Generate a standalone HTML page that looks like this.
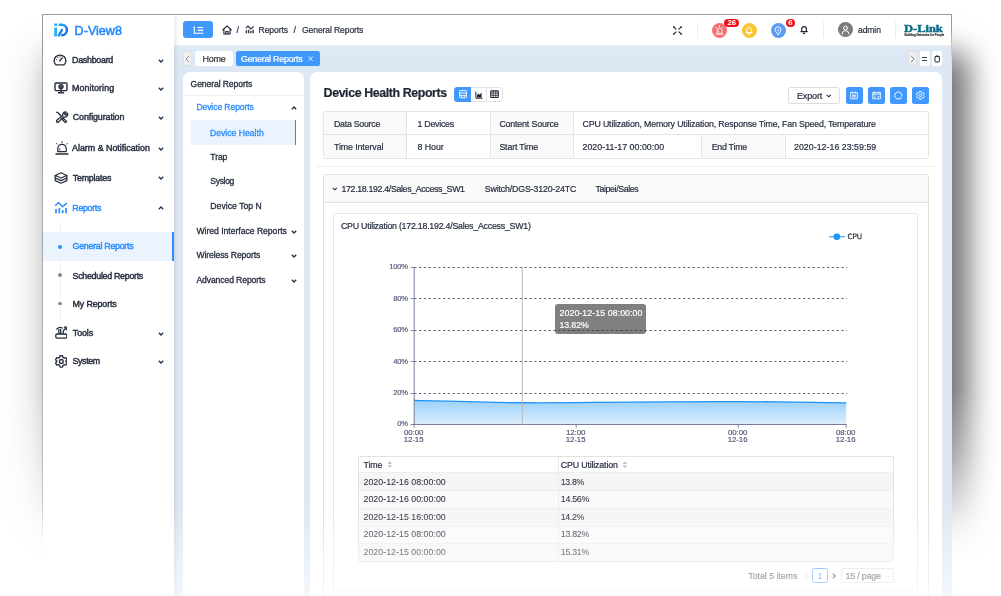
<!DOCTYPE html>
<html lang="en">
<head>
<meta charset="utf-8">
<title>D-View8 - Device Health Reports</title>
<style>
*{box-sizing:border-box;margin:0;padding:0}
html,body{width:1001px;height:596px;overflow:hidden;background:#fff}
body{font-family:"Liberation Sans",sans-serif;color:#262d3f;font-size:8.8px;line-height:1;-webkit-text-stroke:.2px currentColor}
#root{will-change:transform;position:relative;width:1001px;height:596px;overflow:hidden;background:#fff}
.abs{position:absolute}
.t{position:absolute;white-space:nowrap;line-height:12px;height:12px;transform:translateY(-6px)}
/* shadow */
#shadow{position:absolute;left:42px;top:14px;width:910px;height:620px;box-shadow:0 40px 44px rgba(0,0,0,.2),17px 40px 28px rgba(0,0,0,.5);
 -webkit-mask-image:none}
#shadowwrap{position:absolute;left:0;top:0;width:1001px;height:596px;overflow:hidden;
 -webkit-mask-image:linear-gradient(to bottom,#000 0,#000 388px,rgba(0,0,0,.86) 416px,rgba(0,0,0,.68) 452px,rgba(0,0,0,.4) 489px,rgba(0,0,0,.17) 522px,rgba(0,0,0,.05) 545px,transparent 562px);mask-image:linear-gradient(to bottom,#000 0,#000 388px,rgba(0,0,0,.86) 416px,rgba(0,0,0,.68) 452px,rgba(0,0,0,.4) 489px,rgba(0,0,0,.17) 522px,rgba(0,0,0,.05) 545px,transparent 562px)}
#win{position:absolute;left:42px;top:14px;width:910px;height:600px;background:#dce8f3;background-clip:padding-box;border:1px solid #9b9b9b;border-left-color:transparent;border-right:0;overflow:hidden}
/* everything inside #win is positioned relative to page coords via inner offset */
#in{position:absolute;left:-43px;top:-15px;width:1001px;height:620px}
#side{position:absolute;left:43px;top:15px;width:131px;height:600px;background:#fff;box-shadow:1px 0 5px rgba(0,30,70,.13)}
#top{position:absolute;left:174px;top:15px;width:778px;height:29.8px;background:#fff}
#band{position:absolute;left:174px;top:44.8px;width:778px;height:6px;background:linear-gradient(to bottom,#e7eff7 0,#dce8f3 5px)}
.m{font-weight:400;font-size:8.9px;color:#262d3f;letter-spacing:-.1px;-webkit-text-stroke:.42px currentColor}
.sub{font-weight:400;font-size:8.9px;color:#262d3f;letter-spacing:-.1px;-webkit-text-stroke:.42px currentColor}
.blue{color:#2a8cff !important}
.tb{font-size:8.8px;color:#262d3f;letter-spacing:-.15px}
.bc{font-size:8.6px;color:#262d3f;letter-spacing:-.12px}
.chev{position:absolute;width:6px;height:4px}
.panel{position:absolute;background:#fff;border-radius:7px 7px 0 0}
.lp{font-size:8.6px;color:#262d3f;letter-spacing:-.1px;-webkit-text-stroke:.3px currentColor}
.cell{position:absolute;border-right:1px solid #e4e4e4;border-bottom:1px solid #e4e4e4}
.lab{background:#fafafa}
.bbtn{position:absolute;width:17px;height:17px;background:#4098fc;border-radius:2.5px;top:87px}
.tick{position:absolute;font-size:7.6px;color:#4d5374;-webkit-text-stroke:.15px #4d5374;letter-spacing:-.2px;text-align:right;width:30px;line-height:10px;height:10px;transform:translateY(-5px)}
.xl{position:absolute;font-size:7.9px;color:#4d5374;-webkit-text-stroke:.15px #4d5374;text-align:center;width:40px;line-height:7.6px;letter-spacing:-.1px}
.row{position:absolute;left:358.5px;width:535px;height:17.8px;border-bottom:1px solid #e9e9e9}
.row .t{top:9px}
</style>
</head>
<body>
<div id="root">
 <div id="shadowwrap"><div id="shadow"></div></div>
 <div id="win"><div id="in">

  <!-- TOP BAR -->
  <div id="top"></div><div id="band"></div>
  <div class="abs" style="left:183.3px;top:21.2px;width:29.6px;height:17.3px;border-radius:3px;background:#4098fc"></div>
  <svg class="abs" style="left:192.6px;top:25.6px" width="11" height="8.4" viewBox="0 0 11 8.4" fill="none" stroke="#fff" stroke-linecap="butt">
   <path d="M1.3 .8 V7.2 H10.2" stroke-width="1.1"/><path d="M4.4 1.5 H10.2" stroke-width="1.1"/><path d="M5 4.3 H10.2" stroke-width="1.5"/><path d="M.6 1.2 H2" stroke-width="1.2"/>
  </svg>
  <!-- breadcrumb -->
  <svg class="abs" style="left:222px;top:24.5px" width="10" height="10" viewBox="0 0 10 10" fill="none" stroke="#262d3f" stroke-width="1.1" stroke-linejoin="round" stroke-linecap="round">
   <path d="M.7 5 L5 .9 L9.3 5"/><path d="M1.9 4.4 V9 H8.1 V4.4"/><path d="M3.8 9 V6.6 H6.2 V9"/>
  </svg>
  <div class="t" style="left:236.5px;top:29.6px;font-size:9px">/</div>
  <svg class="abs" style="left:245.4px;top:25.4px" width="9.4" height="8.7" viewBox="0 0 14 13" fill="none" stroke="#262d3f" stroke-linejoin="miter">
   <path d="M1.2 4.7 L4.5 1.5 L8.5 5.8 L12.8 2.2" stroke-width="1.7" stroke-linecap="butt"/><path d="M2 7.9 V12.3 M5.3 7.1 V12.3 M8.7 9.1 V12.3 M12.1 7.1 V12.3" stroke-width="2"/>
  </svg>
  <div class="t bc" style="left:258.6px;top:29.6px">Reports</div>
  <div class="t" style="left:293.5px;top:29.6px;font-size:9px">/</div>
  <div class="t bc" style="left:302px;top:29.6px">General Reports</div>

  <!-- fullscreen icon -->
  <svg class="abs" style="left:671.8px;top:24.6px" width="11" height="11" viewBox="-5.5 -5.5 11 11" fill="#1f2533" stroke="#1f2533" stroke-width="1.15" stroke-linecap="round">
   <path d="M-1.5 -1.4 L-3.8 -3.6 M1.5 -1.4 L3.8 -3.6 M-1.5 1.4 L-3.8 3.6 M1.5 1.4 L3.8 3.6"/>
   <circle cx="-3.7" cy="-3.5" r=".75" stroke="none"/><circle cx="3.7" cy="-3.5" r=".75" stroke="none"/><circle cx="-3.7" cy="3.5" r=".75" stroke="none"/><circle cx="3.7" cy="3.5" r=".75" stroke="none"/>
  </svg>
  <div class="abs" style="left:697.4px;top:22px;width:1px;height:16px;background:#ededed"></div>
  <!-- alarm circles -->
  <div class="abs" style="left:712px;top:22.7px;width:15px;height:15px;border-radius:50%;background:#f76f6f"></div>
  <svg class="abs" style="left:715px;top:25.1px" width="9" height="10" viewBox="0 0 9 10" fill="none" stroke="#fff" stroke-width=".85" stroke-linecap="round" stroke-linejoin="round">
   <path d="M2 8 V5.6 A2.5 2.5 0 0 1 7 5.6 V8 Z"/><path d="M.9 9.2 H8.1 M4.5 .8 v1 M1 2.2 l.8 .8 M8 2.2 l-.8 .8 M3.6 7 v-1.2"/>
  </svg>
  <div class="abs" style="left:724.2px;top:18.8px;width:15.2px;height:8.4px;border-radius:4.2px;background:#f0141f"></div>
  <div class="t" style="left:724.2px;width:15.2px;text-align:center;top:23.1px;font-size:7.8px;color:#fff;font-weight:700;letter-spacing:0;-webkit-text-stroke:0">26</div>
  <div class="abs" style="left:741.7px;top:22.7px;width:15px;height:15px;border-radius:50%;background:#f9c733"></div>
  <svg class="abs" style="left:745.2px;top:25.8px" width="8" height="9" viewBox="0 0 8 9" fill="none" stroke="#fff" stroke-width=".95" stroke-linecap="round" stroke-linejoin="round">
   <path d="M1.6 6.6 V4 A2.4 2.4 0 0 1 6.4 4 V6.6 Z M.9 6.7 H7.1 M3.4 8.1 H4.6"/>
  </svg>
  <div class="abs" style="left:770.9px;top:22.7px;width:15px;height:15px;border-radius:50%;background:#5b9cf0"></div>
  <svg class="abs" style="left:774.4px;top:25.6px" width="8" height="10" viewBox="0 0 8 10" fill="none" stroke="#fff" stroke-width=".95" stroke-linecap="round" stroke-linejoin="round">
   <path d="M4 8.6 L1.8 5.6 A2.9 2.9 0 1 1 6.2 5.6 Z"/><path d="M4 3.4 v1.4" />
  </svg>
  <div class="abs" style="left:786px;top:18.8px;width:8.6px;height:8.6px;border-radius:50%;background:#f0141f"></div>
  <div class="t" style="left:786px;width:8.6px;text-align:center;top:23.2px;font-size:7.8px;color:#fff;font-weight:700;-webkit-text-stroke:0">6</div>
  <svg class="abs" style="left:800.4px;top:25px" width="8.2" height="9.4" viewBox="0 0 9 10" fill="none" stroke="#1f2533" stroke-width="1.25" stroke-linecap="round" stroke-linejoin="round">
   <path d="M1.9 7 V4.2 A2.6 2.6 0 0 1 7.1 4.2 V7 Z M1 7.1 H8 M3.7 9 H5.3"/>
  </svg>
  <div class="abs" style="left:822.8px;top:22px;width:1px;height:16px;background:#ededed"></div>
  <div class="abs" style="left:837.9px;top:22.1px;width:14.9px;height:14.9px;border-radius:50%;background:#7c7c7c"></div>
  <svg class="abs" style="left:840.9px;top:24.8px" width="9" height="10" viewBox="0 0 9 10" fill="none" stroke="#fff" stroke-width="1" stroke-linecap="round">
   <circle cx="4.5" cy="3" r="1.9"/><path d="M1.1 9 A3.4 3.4 0 0 1 7.9 9"/>
  </svg>
  <div class="t bc" style="left:858px;top:29.8px">admin</div>
  <div class="abs" style="left:895px;top:22px;width:1px;height:16px;background:#ededed"></div>
  <!-- dlink logo -->
  <div class="t" style="left:904.2px;top:28.9px;font-family:'Liberation Serif',serif;font-weight:700;font-size:10.4px;color:#0d6b88;letter-spacing:0;line-height:12px;-webkit-text-stroke:.45px #0d6b88;transform-origin:0 50%;transform:translateY(-6px) scaleX(1.2)">D-Link</div>
  <div class="t" style="left:904.4px;top:34.7px;font-size:2.9px;color:#1a1a1a;line-height:4px;height:4px;transform:translateY(-2px);font-weight:700;letter-spacing:-.02px;-webkit-text-stroke:.1px #1a1a1a">Building Networks for People</div>
  <!-- SIDEBAR -->
  <div id="side"></div>
  <!-- logo -->
  <svg class="abs" style="left:54px;top:22.6px" width="15" height="14" viewBox="0 0 15 14" fill="none">
   <defs><linearGradient id="lg" x1="0" y1="0" x2="1" y2="1"><stop offset="0" stop-color="#23a6f7"/><stop offset="1" stop-color="#1565e8"/></linearGradient></defs>
   <rect x="0.2" y="0.5" width="2.8" height="2.5" fill="#1fb4f6"/>
   <path d="M0.2 4.6 H3 V13.4 H0.2 Z" fill="#1fb4f6"/>
   <path d="M4.7 1.75 H7.7 A5.2 5.2 0 0 1 7.7 12.15 H7.2" stroke="url(#lg)" stroke-width="2.5"/>
   <path d="M4.3 13.4 L8.4 6.1" stroke="#1a83f3" stroke-width="2.3"/>
  </svg>
  <div class="t" style="left:74.6px;top:30.6px;font-size:12.6px;font-weight:400;color:#2389ff;letter-spacing:0;line-height:16px;height:16px;transform:translateY(-8px);-webkit-text-stroke:.5px #2389ff">D-View8</div>

  <!-- menu icons -->
  <svg class="abs" style="left:53.4px;top:53.9px" width="14" height="12" viewBox="0 0 14 12" fill="none" stroke="#262d3f" stroke-width="1.4" stroke-linecap="round" stroke-linejoin="round">
   <path d="M3.1 10.9 A5.9 5.6 0 1 1 10.9 10.9 Z"/><path d="M6.8 6.8 L9.2 3.9"/><path d="M3.2 5.2 l.5 .4 M7 2.6 v.6 M4.6 3.4 l.3 .5" stroke-width=".9"/>
  </svg>
  <svg class="abs" style="left:54.3px;top:82.3px" width="14" height="12" viewBox="0 0 14 12" fill="none" stroke="#262d3f" stroke-width="1.4" stroke-linecap="round" stroke-linejoin="round">
   <rect x="1" y="1" width="12" height="7.6" rx="1"/><circle cx="7" cy="4.6" r="2" /><circle cx="7" cy="4.6" r=".6" fill="#262d3f"/><path d="M7 6.6 V10.6 M4.4 10.8 H9.6"/>
  </svg>
  <svg class="abs" style="left:54.5px;top:110.5px" width="14" height="12" viewBox="0 0 14 12" fill="none" stroke="#262d3f" stroke-width="1.3" stroke-linecap="round" stroke-linejoin="round">
   <path d="M1.6 1.2 L3.4 2 L6.2 5.2 M8 7 L11.6 10.4 A1.2 1.2 0 0 1 10 11.4 L6.6 7.8"/>
   <path d="M12.4 2.2 L10.6 4 L9.4 2.8 L11 1 A2.8 2.8 0 0 0 7.8 4.6 L1.6 9.6 A1.3 1.3 0 0 0 3.2 11.3 L8.8 5.9 A2.8 2.8 0 0 0 12.4 2.2 Z"/>
  </svg>
  <svg class="abs" style="left:54.5px;top:141px" width="14" height="14" viewBox="0 0 14 14" fill="none" stroke="#262d3f" stroke-width="1.25" stroke-linecap="round" stroke-linejoin="round">
   <path d="M2.8 10.6 V7.6 A4.2 4.2 0 0 1 11.2 7.6 V10.6 Z"/><path d="M1 13 H13" stroke-width="1.4"/><path d="M7 .7 v1 M1.6 2.4 l.9 .9 M12.4 2.4 l-.9 .9 M4.8 9 v-1" stroke-width="1"/>
  </svg>
  <svg class="abs" style="left:54.3px;top:171.6px" width="14" height="12.2" viewBox="0 0 14 13" preserveAspectRatio="none" fill="none" stroke="#262d3f" stroke-width="1.25" stroke-linecap="round" stroke-linejoin="round">
   <path d="M7 .9 L12.8 3.7 L7 6.5 L1.2 3.7 Z"/><path d="M1.2 3.7 V9.2 L7 12 L12.8 9.2 V3.7"/><path d="M1.2 6.4 L7 9.2 L12.8 6.4"/>
  </svg>
  <svg class="abs" style="left:54px;top:201px" width="14" height="13" viewBox="0 0 14 13" fill="none" stroke="#2a8cff" stroke-linejoin="miter">
   <path d="M1.2 4.7 L4.5 1.5 L8.5 5.8 L12.8 2.2" stroke-width="1.5" stroke-linecap="butt"/><path d="M2 7.9 V12.3 M5.3 7.1 V12.3 M8.7 9.1 V12.3 M12.1 7.1 V12.3" stroke-width="1.7"/>
  </svg>
  <svg class="abs" style="left:54.6px;top:326px" width="12.8" height="13" viewBox="0 0 14 14" preserveAspectRatio="none" fill="none" stroke="#262d3f" stroke-width="1.4" stroke-linecap="round" stroke-linejoin="round">
   <rect x=".9" y="8.6" width="12" height="4.4" rx="1.2"/><path d="M4.2 8.4 V3.6 M6.2 8.4 V3.6 M2 3.2 Q5 .4 8 2.2 M9 8.4 V5.2 M9 5.2 L11.8 2.6 M10.4 1.8 A1.6 1.6 0 1 1 12.6 4"/>
  </svg>
  <svg class="abs" style="left:54.8px;top:355.2px" width="12.6" height="12.8" viewBox="0 0 14 14" preserveAspectRatio="none" fill="none" stroke="#262d3f" stroke-width="1.45" stroke-linecap="round" stroke-linejoin="round">
   <path d="M5.6 .8 H8.4 L8.9 2.6 L10.3 3.4 L12.1 2.9 L13.4 5.3 L12.1 6.6 V7.4 L13.4 8.7 L12.1 11.1 L10.3 10.6 L8.9 11.4 L8.4 13.2 H5.6 L5.1 11.4 L3.7 10.6 L1.9 11.1 L.6 8.7 L1.9 7.4 V6.6 L.6 5.3 L1.9 2.9 L3.7 3.4 L5.1 2.6 Z"/><circle cx="7" cy="7" r="2.1"/>
  </svg>

  <!-- menu labels -->
  <div class="t m" style="left:72px;top:60px;letter-spacing:-0.27px">Dashboard</div>
  <div class="t m" style="left:72px;top:88.3px;letter-spacing:0.07px">Monitoring</div>
  <div class="t m" style="left:72.8px;top:117px;letter-spacing:-0.1px">Configuration</div>
  <div class="t m" style="left:72px;top:148.2px;letter-spacing:0px">Alarm &amp; Notification</div>
  <div class="t m" style="left:72.8px;top:177.5px;letter-spacing:-0.23px">Templates</div>
  <div class="t m blue" style="left:72.3px;top:207.6px;letter-spacing:-0.33px">Reports</div>
  <div class="t m" style="left:72.8px;top:333px;letter-spacing:-0.1px">Tools</div>
  <div class="t m" style="left:72.5px;top:361.2px;letter-spacing:-0.37px">System</div>
  <!-- chevrons -->
  <svg class="chev" style="left:157.5px;top:58.5px" viewBox="0 0 6 4"><path d="M.8 .8 L3 3 L5.2 .8" fill="none" stroke="#262d3f" stroke-width="1.3"/></svg>
  <svg class="chev" style="left:157.5px;top:86.8px" viewBox="0 0 6 4"><path d="M.8 .8 L3 3 L5.2 .8" fill="none" stroke="#262d3f" stroke-width="1.3"/></svg>
  <svg class="chev" style="left:157.5px;top:115.8px" viewBox="0 0 6 4"><path d="M.8 .8 L3 3 L5.2 .8" fill="none" stroke="#262d3f" stroke-width="1.3"/></svg>
  <svg class="chev" style="left:157.5px;top:146.6px" viewBox="0 0 6 4"><path d="M.8 .8 L3 3 L5.2 .8" fill="none" stroke="#262d3f" stroke-width="1.3"/></svg>
  <svg class="chev" style="left:157.5px;top:176.3px" viewBox="0 0 6 4"><path d="M.8 .8 L3 3 L5.2 .8" fill="none" stroke="#262d3f" stroke-width="1.3"/></svg>
  <svg class="chev" style="left:157.5px;top:206.3px" viewBox="0 0 6 4"><path d="M.8 3.2 L3 1 L5.2 3.2" fill="none" stroke="#262d3f" stroke-width="1.3"/></svg>
  <svg class="chev" style="left:157.5px;top:331.5px" viewBox="0 0 6 4"><path d="M.8 .8 L3 3 L5.2 .8" fill="none" stroke="#262d3f" stroke-width="1.3"/></svg>
  <svg class="chev" style="left:157.5px;top:360px" viewBox="0 0 6 4"><path d="M.8 .8 L3 3 L5.2 .8" fill="none" stroke="#262d3f" stroke-width="1.3"/></svg>

  <!-- submenu -->
  <div class="abs" style="left:59.6px;top:222px;width:1px;height:99px;background:#f1f1f4"></div>
  <div class="abs" style="left:43px;top:231.8px;width:131px;height:29.3px;background:#eaf3fe"></div>
  <div class="abs" style="left:171.8px;top:231.8px;width:2.2px;height:29.3px;background:#2a8cff"></div>
  <div class="abs" style="left:58px;top:244.5px;width:4.2px;height:4.2px;border-radius:50%;background:#2a8cff"></div>
  <div class="abs" style="left:58.2px;top:273.3px;width:3.8px;height:3.8px;border-radius:50%;background:#8a8a8a"></div>
  <div class="abs" style="left:58.2px;top:301.6px;width:3.8px;height:3.8px;border-radius:50%;background:#8a8a8a"></div>
  <div class="t sub blue" style="left:72.6px;top:246.2px;letter-spacing:-0.29px">General Reports</div>
  <div class="t sub" style="left:72.6px;top:275.6px;letter-spacing:-0.3px">Scheduled Reports</div>
  <div class="t sub" style="left:72.6px;top:303.8px;letter-spacing:-0.14px">My Reports</div>

  <!-- TABS -->
  <div class="abs" style="left:183.2px;top:51.3px;width:9.2px;height:14.4px;border-radius:2px;background:#f0f0f0;border:.5px solid #e0e0e0"></div>
  <svg class="abs" style="left:185.2px;top:55px" width="5" height="8" viewBox="0 0 5 8"><path d="M4 .8 L1 4 L4 7.2" fill="none" stroke="#8a8a8a" stroke-width="1"/></svg>
  <div class="abs" style="left:195px;top:51.3px;width:38px;height:14.4px;border-radius:2.5px;background:#fff"></div>
  <div class="t" style="left:202.5px;top:59px;font-size:9px;color:#333;letter-spacing:-0.27px">Home</div>
  <div class="abs" style="left:235.5px;top:51.3px;width:84.5px;height:14.4px;border-radius:2.5px;background:#4098fc"></div>
  <div class="t" style="left:241px;top:58.6px;font-size:8.9px;letter-spacing:-.25px;color:#fff">General Reports</div>
  <svg class="abs" style="left:308.4px;top:56.2px" width="5.4" height="5.4" viewBox="0 0 6 6"><path d="M.7 .7 L5.3 5.3 M5.3 .7 L.7 5.3" stroke="#fff" stroke-width="1" fill="none"/></svg>
  <div class="abs" style="left:907.8px;top:51.3px;width:9px;height:14.4px;border-radius:2px;background:#f0f0f0;border:.5px solid #e0e0e0"></div>
  <svg class="abs" style="left:910px;top:55px" width="5" height="8" viewBox="0 0 5 8"><path d="M1 .8 L4 4 L1 7.2" fill="none" stroke="#7d7d7d" stroke-width="1"/></svg>
  <div class="abs" style="left:920px;top:51.3px;width:9.7px;height:14.4px;border-radius:2px;background:#fff"></div>
  <div class="abs" style="left:922.4px;top:56.7px;width:5px;height:1.1px;background:#3c4358"></div>
  <div class="abs" style="left:922.4px;top:59.6px;width:5px;height:1.1px;background:#3c4358"></div>
  <div class="abs" style="left:932.3px;top:51.3px;width:9.6px;height:14.4px;border-radius:2px;background:#fff"></div>
  <svg class="abs" style="left:934px;top:55px" width="6.4" height="7.6" viewBox="0 0 6.4 7.6" fill="none" stroke="#1f2533" stroke-width="1"><path d="M1 1.6 H5.4 V6.2 A.8 .8 0 0 1 4.6 7 H1.8 A.8 .8 0 0 1 1 6.2 Z"/><path d="M2.2 1 H4.2" stroke-width="1.2"/></svg>

  <!-- LEFT PANEL -->
  <div class="panel" style="left:183px;top:72.2px;width:121px;height:540px"></div>
  <div class="t lp" style="left:190.6px;top:83.5px">General Reports</div>
  <div class="abs" style="left:183px;top:95.2px;width:121px;height:1px;background:#efefef"></div>
  <div class="t lp blue" style="left:196.4px;top:107.4px">Device Reports</div>
  <svg class="chev" style="left:291.2px;top:106px" viewBox="0 0 6 4"><path d="M.8 3.2 L3 1 L5.2 3.2" fill="none" stroke="#262d3f" stroke-width="1.3"/></svg>
  <div class="abs" style="left:190.6px;top:119.8px;width:105.6px;height:24.8px;background:#eaf3fe"></div>
  <div class="abs" style="left:294.8px;top:119.8px;width:1.6px;height:24.8px;background:#2a8cff"></div>
  <div class="t lp blue" style="left:210px;top:133px;letter-spacing:0.02px">Device Health</div>
  <div class="t lp" style="left:210.3px;top:157.4px">Trap</div>
  <div class="t lp" style="left:210.3px;top:181.2px;letter-spacing:-0.35px">Syslog</div>
  <div class="t lp" style="left:210.3px;top:205.6px;letter-spacing:0.05px">Device Top N</div>
  <div class="t lp" style="left:196.4px;top:230.8px;letter-spacing:-0.01px">Wired Interface Reports</div>
  <div class="t lp" style="left:196.4px;top:255.2px">Wireless Reports</div>
  <div class="t lp" style="left:196.4px;top:280px">Advanced Reports</div>
  <svg class="chev" style="left:291.2px;top:229.6px" viewBox="0 0 6 4"><path d="M.8 .8 L3 3 L5.2 .8" fill="none" stroke="#262d3f" stroke-width="1.3"/></svg>
  <svg class="chev" style="left:291.2px;top:254px" viewBox="0 0 6 4"><path d="M.8 .8 L3 3 L5.2 .8" fill="none" stroke="#262d3f" stroke-width="1.3"/></svg>
  <svg class="chev" style="left:291.2px;top:278.8px" viewBox="0 0 6 4"><path d="M.8 .8 L3 3 L5.2 .8" fill="none" stroke="#262d3f" stroke-width="1.3"/></svg>

  <!-- RIGHT PANEL -->
  <div class="panel" style="left:310px;top:72.2px;width:632px;height:540px"></div>
  <div class="t" style="left:323.6px;top:93.2px;font-size:12.4px;font-weight:700;color:#1f2533;line-height:16px;height:16px;transform:translateY(-8px);letter-spacing:-0.4px">Device Health Reports</div>
  <!-- view toggle -->
  <div class="abs" style="left:454.3px;top:87.1px;width:48.3px;height:14.5px;border:.6px solid #e2e2e2;border-radius:3.5px;background:#fff"></div>
  <div class="abs" style="left:454.3px;top:87.1px;width:16.6px;height:14.5px;border-radius:3.5px 0 0 3.5px;background:#4098fc"></div>
  <div class="abs" style="left:486.3px;top:87.1px;width:.6px;height:14.5px;background:#e2e2e2"></div>
  <svg class="abs" style="left:458.6px;top:90.2px" width="8" height="8.4" viewBox="0 0 8 8.4" fill="none" stroke="#fff" stroke-width=".9"><rect x=".6" y=".6" width="6.8" height="7.2" rx=".8"/><path d="M.6 3 H7.4 M.6 5.4 H7.4 M2 6.8 h1.2 M4.8 6.8 h1.2"/></svg>
  <svg class="abs" style="left:474.8px;top:90.6px" width="8" height="8" viewBox="0 0 8 8"><path d="M.9 .6 V7.2 H7.6" fill="none" stroke="#1f2533" stroke-width="1"/><path d="M2 6.4 V4.2 L3.4 2.6 L4.6 3.8 L6.6 1.6 V6.4 Z" fill="#1f2533"/></svg>
  <svg class="abs" style="left:490.2px;top:90.4px" width="9" height="8.4" viewBox="0 0 9 8.4" fill="none" stroke="#1f2533"><rect x=".7" y=".9" width="7.6" height="6.6" rx=".7" stroke-width="1.1"/><path d="M.7 3.1 H8.3 M.7 5.3 H8.3 M3.2 .9 V7.5 M5.8 .9 V7.5" stroke-width=".8"/></svg>
  <!-- export + buttons -->
  <div class="abs" style="left:788.2px;top:87.2px;width:52.2px;height:16.6px;border:.8px solid #dcdcdc;border-radius:2.5px;background:#fff"></div>
  <div class="t" style="left:797px;top:95.5px;font-size:9px;letter-spacing:-.15px;color:#262d3f">Export</div>
  <svg class="chev" style="left:825.6px;top:94px;width:5.6px;height:3.8px" viewBox="0 0 6 4"><path d="M.8 .8 L3 3 L5.2 .8" fill="none" stroke="#262d3f" stroke-width="1.2"/></svg>
  <div class="bbtn" style="left:845.6px"></div>
  <div class="bbtn" style="left:867.7px"></div>
  <div class="bbtn" style="left:889.8px"></div>
  <div class="bbtn" style="left:911.9px"></div>
  <svg class="abs" style="left:850.2px;top:91.4px" width="8" height="8.4" viewBox="0 0 8 8.4" fill="none" stroke="#fff" stroke-width=".85"><path d="M.7 1.6 H7.3 V7.8 H.7 Z M2.4 .5 V2.4 M5.6 .5 V2.4"/><circle cx="4" cy="5" r="1.4"/><path d="M4 4.2 V5 H4.7"/></svg>
  <svg class="abs" style="left:871.6px;top:91.4px" width="9.4" height="8.4" viewBox="0 0 9.4 8.4" fill="none" stroke="#fff" stroke-width=".85"><path d="M.7 1.6 H8.7 V7.8 H.7 Z M.7 3.2 H8.7 M2.6 .5 V2.2 M6.8 .5 V2.2 M2 5 h1.4 M2 6.4 h1.4"/><path d="M5.2 5.6 L6.2 6.6 L7.6 4.8"/></svg>
  <svg class="abs" style="left:894px;top:91.2px" width="8.8" height="8.8" viewBox="0 0 8.8 8.8" fill="none" stroke="#fff" stroke-width=".95" stroke-linecap="round"><path d="M6.8 7.2 A3.6 3.6 0 1 1 7.9 5"/><path d="M6.2 7.6 L7.2 6.6" /></svg>
  <svg class="abs" style="left:916px;top:91.2px" width="8.8" height="8.8" viewBox="0 0 14 14" fill="none" stroke="#fff" stroke-width="1.4" stroke-linejoin="round"><path d="M5.6 .8 H8.4 L8.9 2.6 L10.3 3.4 L12.1 2.9 L13.4 5.3 L12.1 6.6 V7.4 L13.4 8.7 L12.1 11.1 L10.3 10.6 L8.9 11.4 L8.4 13.2 H5.6 L5.1 11.4 L3.7 10.6 L1.9 11.1 L.6 8.7 L1.9 7.4 V6.6 L.6 5.3 L1.9 2.9 L3.7 3.4 L5.1 2.6 Z"/><circle cx="7" cy="7" r="2.1"/></svg>

  <!-- info table -->
  <div class="abs" style="left:322.8px;top:111px;width:606px;height:48px;border:1px solid #e4e4e4;border-radius:2.5px;background:#fff;overflow:hidden">
   <div class="abs lab" style="left:0;top:0;width:82.6px;height:46px"></div>
   <div class="abs lab" style="left:166.6px;top:0;width:82.4px;height:46px"></div>
   <div class="abs lab" style="left:377.6px;top:22.4px;width:83.4px;height:24px"></div>
   <div class="abs" style="left:0;top:22.4px;width:604px;height:1px;background:#e4e4e4"></div>
   <div class="abs" style="left:82.6px;top:0;width:1px;height:46px;background:#e4e4e4"></div>
   <div class="abs" style="left:166.4px;top:0;width:1px;height:46px;background:#e4e4e4"></div>
   <div class="abs" style="left:249px;top:0;width:1px;height:46px;background:#e4e4e4"></div>
   <div class="abs" style="left:377.6px;top:23px;width:1px;height:23px;background:#e4e4e4"></div>
   <div class="abs" style="left:461px;top:23px;width:1px;height:23px;background:#e4e4e4"></div>
  </div>
  <div class="t tb" style="left:334px;top:124px;letter-spacing:-0.26px">Data Source</div>
  <div class="t tb" style="left:334px;top:147px;letter-spacing:-0.09px">Time Interval</div>
  <div class="t tb" style="left:417.5px;top:124px;letter-spacing:-0.25px">1 Devices</div>
  <div class="t tb" style="left:417.5px;top:147px;letter-spacing:-0.03px">8 Hour</div>
  <div class="t tb" style="left:499.4px;top:124px">Content Source</div>
  <div class="t tb" style="left:499.4px;top:147px">Start Time</div>
  <div class="t tb" style="left:582.5px;top:124px">CPU Utilization, Memory Utilization, Response Time, Fan Speed, Temperature</div>
  <div class="t tb" style="left:582.5px;top:147px;letter-spacing:0.03px">2020-11-17 00:00:00</div>
  <div class="t tb" style="left:711.7px;top:147px;letter-spacing:-0.25px">End Time</div>
  <div class="t tb" style="left:794px;top:147px;letter-spacing:0.03px">2020-12-16 23:59:59</div>
  <div class="abs" style="left:316.4px;top:166px;width:619.6px;height:.8px;background:#eeeeee"></div>

  <!-- collapse -->
  <div class="abs" style="left:323.4px;top:174.3px;width:605.4px;height:440px;border:.9px solid #e0e0e0;border-radius:2.5px;background:#fff"></div>
  <div class="abs" style="left:324.2px;top:175.1px;width:603.8px;height:28.2px;background:#fafafa;border-bottom:.9px solid #e0e0e0"></div>
  <svg class="chev" style="left:331.6px;top:187px;width:5.6px;height:3.8px" viewBox="0 0 6 4"><path d="M.8 .8 L3 3 L5.2 .8" fill="none" stroke="#262d3f" stroke-width="1.2"/></svg>
  <div class="t tb" style="left:341.5px;top:188.5px;letter-spacing:-0.34px">172.18.192.4/Sales_Access_SW1</div>
  <div class="t tb" style="left:484.8px;top:188.5px">Switch/DGS-3120-24TC</div>
  <div class="t tb" style="left:595.4px;top:188.5px;letter-spacing:-0.37px">Taipei/Sales</div>

  <!-- chart card -->
  <div class="abs" style="left:333.2px;top:212.8px;width:585.2px;height:378px;border:.9px solid #e6e6e6;border-radius:1.5px;background:#fff"></div>
  <div class="t tb" style="left:341px;top:225.5px;letter-spacing:-0.23px">CPU Utilization (172.18.192.4/Sales_Access_SW1)</div>

  <!-- chart -->
  <svg class="abs" style="left:0;top:0" width="1001" height="596" viewBox="0 0 1001 596" fill="none">
   <defs><linearGradient id="ag" x1="0" y1="0" x2="0" y2="1"><stop offset="0" stop-color="#9bd0fa"/><stop offset="1" stop-color="#dceefc"/></linearGradient></defs>
   <path d="M410.6 393.5 H414.2" stroke="#6a7090" stroke-width=".8"/><path d="M414.2 393.5 H847.0" stroke="#4f5572" stroke-width=".9" stroke-dasharray="2.4 2.4"/><path d="M410.6 361.5 H414.2" stroke="#6a7090" stroke-width=".8"/><path d="M414.2 361.5 H847.0" stroke="#4f5572" stroke-width=".9" stroke-dasharray="2.4 2.4"/><path d="M410.6 330.5 H414.2" stroke="#6a7090" stroke-width=".8"/><path d="M414.2 330.5 H847.0" stroke="#4f5572" stroke-width=".9" stroke-dasharray="2.4 2.4"/><path d="M410.6 298.5 H414.2" stroke="#6a7090" stroke-width=".8"/><path d="M414.2 298.5 H847.0" stroke="#4f5572" stroke-width=".9" stroke-dasharray="2.4 2.4"/><path d="M410.6 267.5 H414.2" stroke="#6a7090" stroke-width=".8"/><path d="M414.2 267.5 H847.0" stroke="#4f5572" stroke-width=".9" stroke-dasharray="2.4 2.4"/>
   <path d="M414.2 400.40 C432.2 400.79 486.2 402.46 522.2 402.75 C558.2 403.04 594.2 402.34 630.2 402.15 C666.2 401.96 702.2 401.48 738.2 401.58 C774.2 401.69 828.2 402.58 846.2 402.78 L846.2 424.5 L414.2 424.5 Z" fill="url(#ag)"/>
   <path d="M414.2 400.40 C432.2 400.79 486.2 402.46 522.2 402.75 C558.2 403.04 594.2 402.34 630.2 402.15 C666.2 401.96 702.2 401.48 738.2 401.58 C774.2 401.69 828.2 402.58 846.2 402.78" stroke="#1f93f5" stroke-width="1.3"/>
   <path d="M414.2 267.1 V424.5" stroke="#6a7090" stroke-width=".9"/>
   <path d="M410.6 424.5 H846.7" stroke="#6a7090" stroke-width=".9"/>
   <path d="M414.2 424.5 V427.9" stroke="#6a7090" stroke-width=".8"/><path d="M576.2 424.5 V427.9" stroke="#6a7090" stroke-width=".8"/><path d="M738.2 424.5 V427.9" stroke="#6a7090" stroke-width=".8"/><path d="M846.2 424.5 V427.9" stroke="#6a7090" stroke-width=".8"/>
   <path d="M522.3 267.1 V424.5" stroke="#b9b9b9" stroke-width="1"/>
   <path d="M829 236.8 H845" stroke="#2b9ffc" stroke-width="1.1"/>
   <circle cx="836.8" cy="236.8" r="3.3" fill="#1895fa"/>
   <text x="847.6" y="239.4" font-family="DejaVu Sans, sans-serif" font-size="7.3" fill="#222" stroke="#222" stroke-width=".15" letter-spacing="-.2">CPU</text>
  </svg>
  <div class="tick" style="left:377.8px;top:424.3px">0%</div>
  <div class="tick" style="left:377.8px;top:393.1px">20%</div>
  <div class="tick" style="left:377.8px;top:361.6px">40%</div>
  <div class="tick" style="left:377.8px;top:330.2px">60%</div>
  <div class="tick" style="left:377.8px;top:298.7px">80%</div>
  <div class="tick" style="left:377.8px;top:267.2px">100%</div>
  <div class="xl" style="left:393.6px;top:428.6px">00:00<br>12-15</div>
  <div class="xl" style="left:555.6px;top:428.6px">12:00<br>12-15</div>
  <div class="xl" style="left:717.6px;top:428.6px">00:00<br>12-16</div>
  <div class="xl" style="left:825.6px;top:428.6px">08:00<br>12-16</div>

  <div class="abs" style="left:554.8px;top:304.1px;width:91px;height:29.5px;border-radius:3px;background:rgba(50,50,50,.62)"></div>
  <div class="t" style="left:559.5px;top:313.2px;font-size:8.8px;color:#fff;letter-spacing:0.07px">2020-12-15 08:00:00</div>
  <div class="t" style="left:559.5px;top:325.2px;font-size:8.8px;color:#fff;letter-spacing:-.12px">13.82%</div>

  <!-- data table -->
  <div class="abs" style="left:358.2px;top:456.2px;width:535.4px;height:105.4px;border:.9px solid #e2e2e2;border-radius:2px;background:#fff;overflow:hidden">
   <div class="abs" style="left:0;top:15.1px;width:535px;height:17.7px;background:#f5f5f5;border-top:.9px solid #eeeeee"></div>
   <div class="abs" style="left:0;top:32.8px;width:535px;height:17.7px;background:#fafafa;border-top:.9px solid #eeeeee"></div>
   <div class="abs" style="left:0;top:50.5px;width:535px;height:18.0px;background:#f5f5f5;border-top:.9px solid #eeeeee"></div>
   <div class="abs" style="left:0;top:68.5px;width:535px;height:17.7px;background:#fafafa;border-top:.9px solid #eeeeee"></div>
   <div class="abs" style="left:0;top:86.2px;width:535px;height:17.9px;background:#f5f5f5;border-top:.9px solid #eeeeee"></div>
   <div class="abs" style="left:198.6px;top:0;width:.9px;height:105px;background:#ececec"></div>
  </div>
  <div class="t tb" style="left:363.5px;top:464.8px">Time</div>
  <div class="t tb" style="left:560.8px;top:464.8px">CPU Utilization</div>
  <svg class="abs" style="left:386.6px;top:461.4px" width="5.6" height="7.4" viewBox="0 0 5 7"><path d="M.2 2.9 L2.5 .3 L4.8 2.9 Z M.2 4.1 L2.5 6.7 L4.8 4.1 Z" fill="#c4c4c4"/></svg>
  <svg class="abs" style="left:622px;top:461.4px" width="5.6" height="7.4" viewBox="0 0 5 7"><path d="M.2 2.9 L2.5 .3 L4.8 2.9 Z M.2 4.1 L2.5 6.7 L4.8 4.1 Z" fill="#c4c4c4"/></svg>
  <div class="t tb" style="left:363.5px;top:481.5px;letter-spacing:0.03px;-webkit-text-stroke:.05px currentColor;color:#2a2f3d">2020-12-16 08:00:00</div>
  <div class="t tb" style="left:560.8px;top:481.5px;letter-spacing:-0.37px;-webkit-text-stroke:.05px currentColor;color:#2a2f3d">13.8%</div>
  <div class="t tb" style="left:363.5px;top:499px;letter-spacing:0.03px;-webkit-text-stroke:.05px currentColor;color:#2a2f3d">2020-12-16 00:00:00</div>
  <div class="t tb" style="left:560.8px;top:499px;letter-spacing:-0.27px;-webkit-text-stroke:.05px currentColor;color:#2a2f3d">14.56%</div>
  <div class="t tb" style="left:363.5px;top:517.2px;letter-spacing:0.03px;-webkit-text-stroke:.05px currentColor;color:#2a2f3d">2020-12-15 16:00:00</div>
  <div class="t tb" style="left:560.8px;top:517.2px;letter-spacing:-0.37px;-webkit-text-stroke:.05px currentColor;color:#2a2f3d">14.2%</div>
  <div class="t tb" style="left:363.5px;top:534px;letter-spacing:0.03px;-webkit-text-stroke:.05px currentColor;color:#2a2f3d">2020-12-15 08:00:00</div>
  <div class="t tb" style="left:560.8px;top:534px;letter-spacing:-0.27px;-webkit-text-stroke:.05px currentColor;color:#2a2f3d">13.82%</div>
  <div class="t tb" style="left:363.5px;top:552.4px;letter-spacing:0.03px;-webkit-text-stroke:.05px currentColor;color:#2a2f3d">2020-12-15 00:00:00</div>
  <div class="t tb" style="left:560.8px;top:552.4px;letter-spacing:-0.27px;-webkit-text-stroke:.05px currentColor;color:#2a2f3d">15.31%</div>

  <!-- pagination -->
  <div class="t tb" style="left:748.3px;top:576px;color:#3a3f50;letter-spacing:-0.03px">Total 5 items</div>
  <svg class="abs" style="left:804px;top:573px" width="4" height="6" viewBox="0 0 4 6"><path d="M3.2 .6 L.9 3 L3.2 5.4" fill="none" stroke="#c4c4c4" stroke-width=".9"/></svg>
  <div class="abs" style="left:812px;top:568.4px;width:15.8px;height:14.4px;border:.9px solid #4098fc;border-radius:2.5px;background:#fff"></div>
  <div class="t tb" style="left:812px;width:15.8px;text-align:center;top:575.8px;color:#4098fc">1</div>
  <svg class="abs" style="left:832.4px;top:573px" width="4" height="6" viewBox="0 0 4 6"><path d="M.8 .6 L3.1 3 L.8 5.4" fill="none" stroke="#2a2f3d" stroke-width="1.3"/></svg>
  <div class="abs" style="left:840.5px;top:568.4px;width:53px;height:14.4px;border:.9px solid #dcdcdc;border-radius:2.5px;background:#fff"></div>
  <div class="t tb" style="left:845.5px;top:575.8px;color:#3a3f50">15 / page</div>
  <svg class="chev" style="left:884.6px;top:574.6px;width:5px;height:3.4px" viewBox="0 0 6 4"><path d="M.8 .8 L3 3 L5.2 .8" fill="none" stroke="#bbb" stroke-width="1"/></svg>

 </div></div>
 <div class="abs" style="left:951px;top:14px;width:1px;height:60px;background:linear-gradient(to bottom,#9b9b9b 0,#9b9b9b 14px,rgba(155,155,155,0) 50px)"></div>
 <div class="abs" style="left:42px;top:14px;width:1px;height:582px;background:linear-gradient(to bottom,#9b9b9b 0,#a8a8a8 200px,#b0b0b0 330px,#b8b8b8 436px,rgba(190,190,190,.85) 490px,rgba(200,200,200,.45) 515px,rgba(210,210,210,0) 532px)"></div>
 <div id="fade" class="abs" style="left:0;top:0;width:1001px;height:596px;pointer-events:none;
  background:linear-gradient(to bottom,rgba(255,255,255,0) 500px,rgba(255,255,255,.1) 518px,rgba(255,255,255,.27) 535px,rgba(255,255,255,.38) 553px,rgba(255,255,255,.53) 577px,rgba(255,255,255,.7) 596px)"></div>
</div>
</body>
</html>
